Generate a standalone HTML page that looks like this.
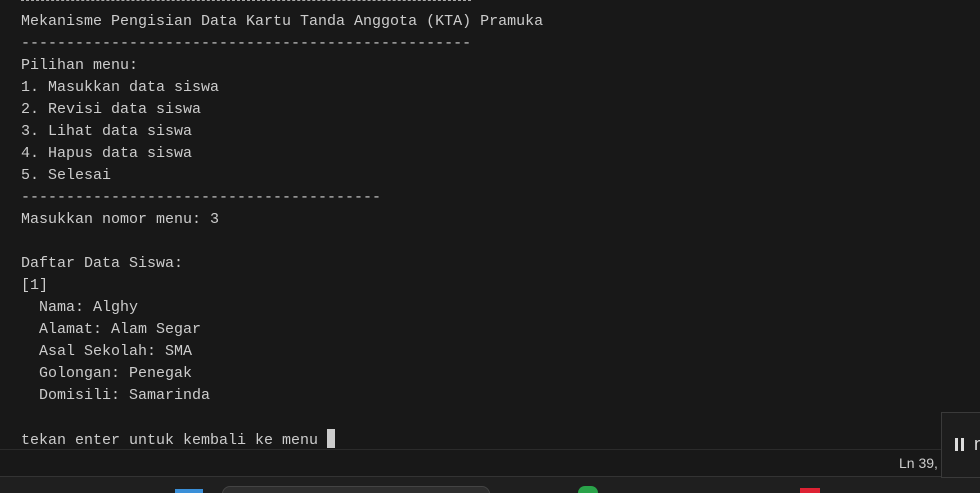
<!DOCTYPE html>
<html><head><style>
html,body{margin:0;width:980px;height:493px;overflow:hidden;}
body{background:#181818;position:relative;font-family:"Liberation Mono",monospace;}
pre{position:absolute;left:21px;top:11px;margin:0;font-family:"Liberation Mono",monospace;font-size:15px;line-height:22px;color:#cccccc;}
.top{position:absolute;left:21px;top:0;width:450px;height:1px;border-top:1px dashed #aaa;}
.cur{display:inline-block;width:8px;height:19px;background:#cccccc;vertical-align:-4px;}
.sb{position:absolute;left:0;top:449px;width:980px;height:27px;border-top:1px solid #2b2b2b;background:#181818;}
.sb span{position:absolute;left:899px;top:5px;font-family:"Liberation Sans",sans-serif;font-size:14px;color:#cccccc;}
.tb{position:absolute;left:0;top:476px;width:980px;height:17px;background:#1f1f1f;border-top:1px solid #333;}
.pop{position:absolute;left:941px;top:412px;width:45px;height:64px;background:#1d1d1d;border:1px solid #3a3a3a;}
.bar{position:absolute;top:25px;width:3px;height:13px;background:#ddd;}
.pop b{position:absolute;left:32px;top:21px;font-family:"Liberation Sans",sans-serif;font-size:18px;color:#ddd;font-weight:normal;}
.srch{position:absolute;left:222px;top:486px;width:266px;height:14px;border-radius:8px;background:#2e2e2e;border:1px solid #444;}
</style></head><body>
<div class="top"></div>
<pre>Mekanisme Pengisian Data Kartu Tanda Anggota (KTA) Pramuka
--------------------------------------------------
Pilihan menu:
1. Masukkan data siswa
2. Revisi data siswa
3. Lihat data siswa
4. Hapus data siswa
5. Selesai
----------------------------------------
Masukkan nomor menu: 3

Daftar Data Siswa:
[1]
  Nama: Alghy
  Alamat: Alam Segar
  Asal Sekolah: SMA
  Golongan: Penegak
  Domisili: Samarinda

tekan enter untuk kembali ke menu <span class="cur"></span></pre>
<div class="sb"><span>Ln 39,</span></div>
<div class="tb"></div>
<div class="srch"></div>
<div style="position:absolute;left:175px;top:489px;width:28px;height:4px;background:#3a8fd8"></div>
<div style="position:absolute;left:578px;top:486px;width:20px;height:7px;border-radius:10px 10px 0 0;background:#2aa34a"></div>
<div style="position:absolute;left:800px;top:488px;width:20px;height:5px;background:#d23"></div>
<div class="pop"><div class="bar" style="left:13px"></div><div class="bar" style="left:19px"></div><b>n</b></div>
</body></html>
